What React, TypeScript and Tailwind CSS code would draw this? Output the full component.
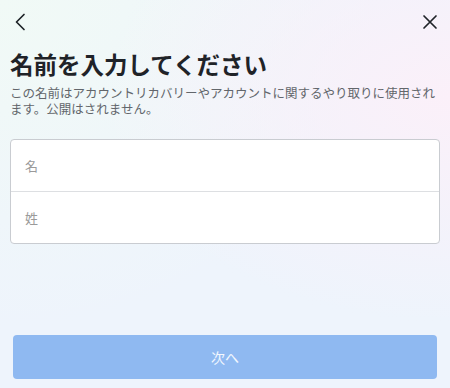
import React from "react";

export default function App() {
  return (
    <div
      className="w-[450px] h-[388px] flex flex-col px-[10px] overflow-hidden bg-[#eef4fc] bg-[image:radial-gradient(ellipse_at_100%_25%,#fbf0f9_0%,rgba(251,240,249,0)_55%),radial-gradient(ellipse_at_0%_0%,#f1faf6_0%,rgba(241,250,246,0)_60%)]"
      style={{ fontFamily: '"Noto Sans CJK JP", "Noto Sans", sans-serif' }}
    >
      <div className="h-[44px] flex items-center justify-between shrink-0">
        <svg width="24" height="24" viewBox="0 0 24 24" fill="none" stroke="#1f2328" strokeWidth="1.7" strokeLinecap="round" strokeLinejoin="round">
          <path d="M14 4.5 L6.5 12 L14 19.5" />
        </svg>
        <svg width="24" height="24" viewBox="0 0 24 24" fill="none" stroke="#1f2328" strokeWidth="1.7" strokeLinecap="round">
          <path d="M8 6 L20 18 M20 6 L8 18" />
        </svg>
      </div>
      <h1 className="mt-[4px] text-[23.5px] leading-[32px] font-bold text-[#1f2328] whitespace-nowrap">
        名前を入力してください
      </h1>
      <p className="mt-[5px] text-[12.5px] leading-[16px] text-[#62666b]">
        この名前はアカウントリカバリーやアカウントに関するやり取りに使用されます。公開はされません。
      </p>
      <div className="mt-[22px] border border-[#c9ccd1] rounded-[4px] bg-white flex flex-col">
        <div className="h-[52px] flex items-center pl-[14px] text-[13px] text-[#9a9a9a] border-b border-[#dddfe2]">
          名
        </div>
        <div className="h-[51px] flex items-center pl-[14px] text-[13px] text-[#9a9a9a]">
          姓
        </div>
      </div>
      <div className="flex-1" />
      <button className="mx-[3px] mb-[9px] h-[44px] rounded-[4px] bg-[#8fb9f1] text-[14px] text-white/90 flex items-center justify-center shrink-0">
        次へ
      </button>
    </div>
  );
}
